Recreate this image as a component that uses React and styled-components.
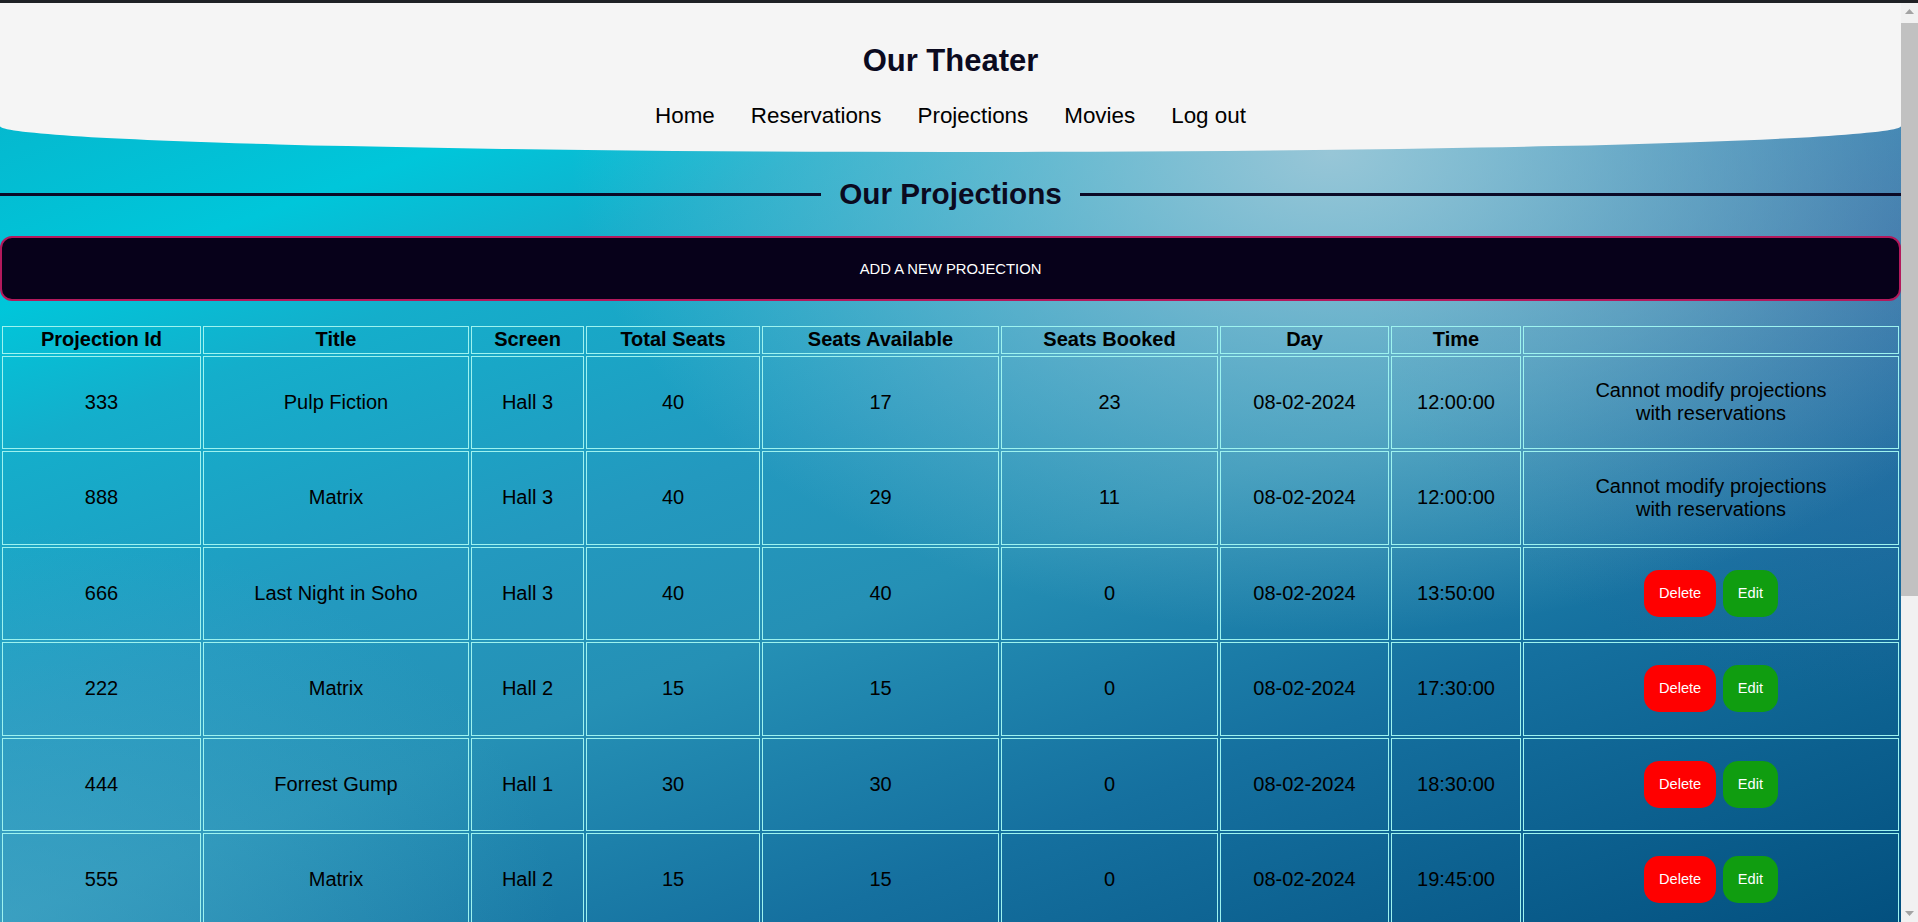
import React from "react";
import styled, { createGlobalStyle } from "styled-components";

const GlobalStyle = createGlobalStyle`
  html, body { margin: 0; padding: 0; }
  body {
    font-family: "Liberation Sans", Arial, sans-serif;
    overflow: hidden;
    background: #f1f1f1;
  }
`;

const Viewport = styled.div`
  height: 100vh;
  display: flex;
  flex-direction: column;
  overflow: hidden;
`;

const TopStrip = styled.div`
  height: 3px;
  flex: none;
  background: #1f2125;
`;

const Frame = styled.div`
  flex: 1;
  min-height: 0;
  display: flex;
`;

const Content = styled.main`
  flex: 1;
  min-width: 0;
  overflow: hidden;
  display: flex;
  flex-direction: column;
  background-color: #1a86b0;
  background-image:
    radial-gradient(ellipse 760px 480px at 1330px 150px, rgba(158, 200, 216, 0.95) 0%, rgba(158, 200, 216, 0.55) 40%, rgba(158, 200, 216, 0) 100%),
    radial-gradient(ellipse 600px 520px at 1901px 230px, rgba(50, 100, 160, 0.8) 0%, rgba(50, 100, 160, 0) 90%),
    radial-gradient(ellipse 700px 500px at 0px 920px, rgba(80, 175, 205, 0.5), rgba(80, 175, 205, 0) 80%),
    linear-gradient(160deg, #08b0c8 0%, #00c6da 19%, #14aecb 28%, #2399bf 45%, #2590b5 57%, #15709f 75%, #03507f 100%);
`;

const ScrollBar = styled.div`
  width: 17px;
  flex: none;
  display: flex;
  flex-direction: column;
  background: #f1f1f1;
`;

const ScrollArrow = styled.div`
  height: 17px;
  flex: none;
  display: flex;
  align-items: center;
  justify-content: center;
`;

const Thumb = styled.div`
  margin-top: 3px;
  height: 573px;
  flex: none;
  background: #c1c1c1;
`;

const ScrollSpacer = styled.div`
  flex: 1;
`;

const Header = styled.header`
  background: #f5f5f5;
  height: 149px;
  flex: none;
  box-sizing: border-box;
  padding-top: 40px;
  border-radius: 0 0 50% 50% / 0 0 26px 26px;
  display: flex;
  flex-direction: column;
  align-items: center;
`;

const SiteTitle = styled.h1`
  margin: 0;
  font-size: 31px;
  line-height: 36px;
  font-weight: bold;
  color: #0b0a1f;
`;

const Nav = styled.nav`
  margin-top: 24px;
  display: flex;
  gap: 36px;
`;

const NavLink = styled.a`
  font-size: 22.4px;
  line-height: 26px;
  color: #000;
  text-decoration: none;
  cursor: pointer;
`;

const TitleRow = styled.div`
  margin-top: 22px;
  height: 40px;
  flex: none;
  display: flex;
  align-items: center;
  gap: 18px;
`;

const Rule = styled.div`
  flex: 1;
  height: 3px;
  background: #0b0a26;
`;

const SectionTitle = styled.h2`
  margin: 0;
  font-size: 29.7px;
  line-height: 36px;
  font-weight: bold;
  color: #0b0a1f;
`;

const AddButton = styled.button`
  margin-top: 22px;
  height: 65px;
  flex: none;
  width: 100%;
  box-sizing: border-box;
  background: #07011a;
  border: 2px solid #b3195c;
  border-radius: 12px;
  color: #fff;
  font-family: "Liberation Sans", Arial, sans-serif;
  font-size: 14.8px;
  text-transform: uppercase;
  cursor: pointer;
`;

const Table = styled.table`
  margin-top: 23px;
  width: 100%;
  flex: none;
  table-layout: fixed;
  border-collapse: separate;
  border-spacing: 2px;
  color: #000;
  font-size: 20px;
`;

const Th = styled.th`
  box-sizing: border-box;
  width: ${(p) => (p.$w ? `${p.$w}px` : "auto")};
  border: 1px solid #9ef3ef;
  padding: 1px;
  height: 27.5px;
  font-weight: bold;
  line-height: 23px;
  text-align: center;
`;

const Td = styled.td`
  box-sizing: border-box;
  border: 1px solid #9ef3ef;
  padding: 1px;
  height: 93.5px;
  text-align: center;
  vertical-align: middle;
  line-height: 23px;
`;

const Notice = styled.div`
  max-width: 260px;
  margin: 0 auto;
`;

const Actions = styled.div`
  display: flex;
  justify-content: center;
  gap: 6.6px;
`;

const ActionButton = styled.button`
  border: none;
  border-radius: 15px;
  padding: 15px;
  font-family: "Liberation Sans", Arial, sans-serif;
  font-size: 14.6px;
  line-height: 17px;
  color: #fff;
  background: ${(p) => (p.$variant === "delete" ? "#ff0000" : "#109d10")};
  cursor: pointer;
`;

const columns = [
  { label: "Projection Id", w: 199 },
  { label: "Title", w: 266 },
  { label: "Screen", w: 113 },
  { label: "Total Seats", w: 174 },
  { label: "Seats Available", w: 237 },
  { label: "Seats Booked", w: 217 },
  { label: "Day", w: 169 },
  { label: "Time", w: 130 },
  { label: "", w: null },
];

const projections = [
  { id: 333, title: "Pulp Fiction", screen: "Hall 3", total: 40, avail: 17, booked: 23, day: "08-02-2024", time: "12:00:00" },
  { id: 888, title: "Matrix", screen: "Hall 3", total: 40, avail: 29, booked: 11, day: "08-02-2024", time: "12:00:00" },
  { id: 666, title: "Last Night in Soho", screen: "Hall 3", total: 40, avail: 40, booked: 0, day: "08-02-2024", time: "13:50:00" },
  { id: 222, title: "Matrix", screen: "Hall 2", total: 15, avail: 15, booked: 0, day: "08-02-2024", time: "17:30:00" },
  { id: 444, title: "Forrest Gump", screen: "Hall 1", total: 30, avail: 30, booked: 0, day: "08-02-2024", time: "18:30:00" },
  { id: 555, title: "Matrix", screen: "Hall 2", total: 15, avail: 15, booked: 0, day: "08-02-2024", time: "19:45:00" },
];

const Arrow = ({ dir }) => (
  <svg width="9" height="5" viewBox="0 0 9 5">
    <polygon points={dir === "up" ? "4.5,0 9,5 0,5" : "0,0 9,0 4.5,5"} fill="#a3a3a3" />
  </svg>
);

export default function App() {
  return (
    <>
      <GlobalStyle />
      <Viewport>
        <TopStrip />
        <Frame>
          <Content>
            <Header>
              <SiteTitle>Our Theater</SiteTitle>
              <Nav>
                <NavLink>Home</NavLink>
                <NavLink>Reservations</NavLink>
                <NavLink>Projections</NavLink>
                <NavLink>Movies</NavLink>
                <NavLink>Log out</NavLink>
              </Nav>
            </Header>
            <TitleRow>
              <Rule />
              <SectionTitle>Our Projections</SectionTitle>
              <Rule />
            </TitleRow>
            <AddButton>Add a new projection</AddButton>
            <Table>
              <thead>
                <tr>
                  {columns.map((c, i) => (
                    <Th key={i} $w={c.w}>{c.label}</Th>
                  ))}
                </tr>
              </thead>
              <tbody>
                {projections.map((p) => (
                  <tr key={p.id}>
                    <Td>{p.id}</Td>
                    <Td>{p.title}</Td>
                    <Td>{p.screen}</Td>
                    <Td>{p.total}</Td>
                    <Td>{p.avail}</Td>
                    <Td>{p.booked}</Td>
                    <Td>{p.day}</Td>
                    <Td>{p.time}</Td>
                    <Td>
                      {p.booked > 0 ? (
                        <Notice>Cannot modify projections with reservations</Notice>
                      ) : (
                        <Actions>
                          <ActionButton $variant="delete">Delete</ActionButton>
                          <ActionButton $variant="edit">Edit</ActionButton>
                        </Actions>
                      )}
                    </Td>
                  </tr>
                ))}
              </tbody>
            </Table>
          </Content>
          <ScrollBar>
            <ScrollArrow><Arrow dir="up" /></ScrollArrow>
            <Thumb />
            <ScrollSpacer />
            <ScrollArrow><Arrow dir="down" /></ScrollArrow>
          </ScrollBar>
        </Frame>
      </Viewport>
    </>
  );
}
